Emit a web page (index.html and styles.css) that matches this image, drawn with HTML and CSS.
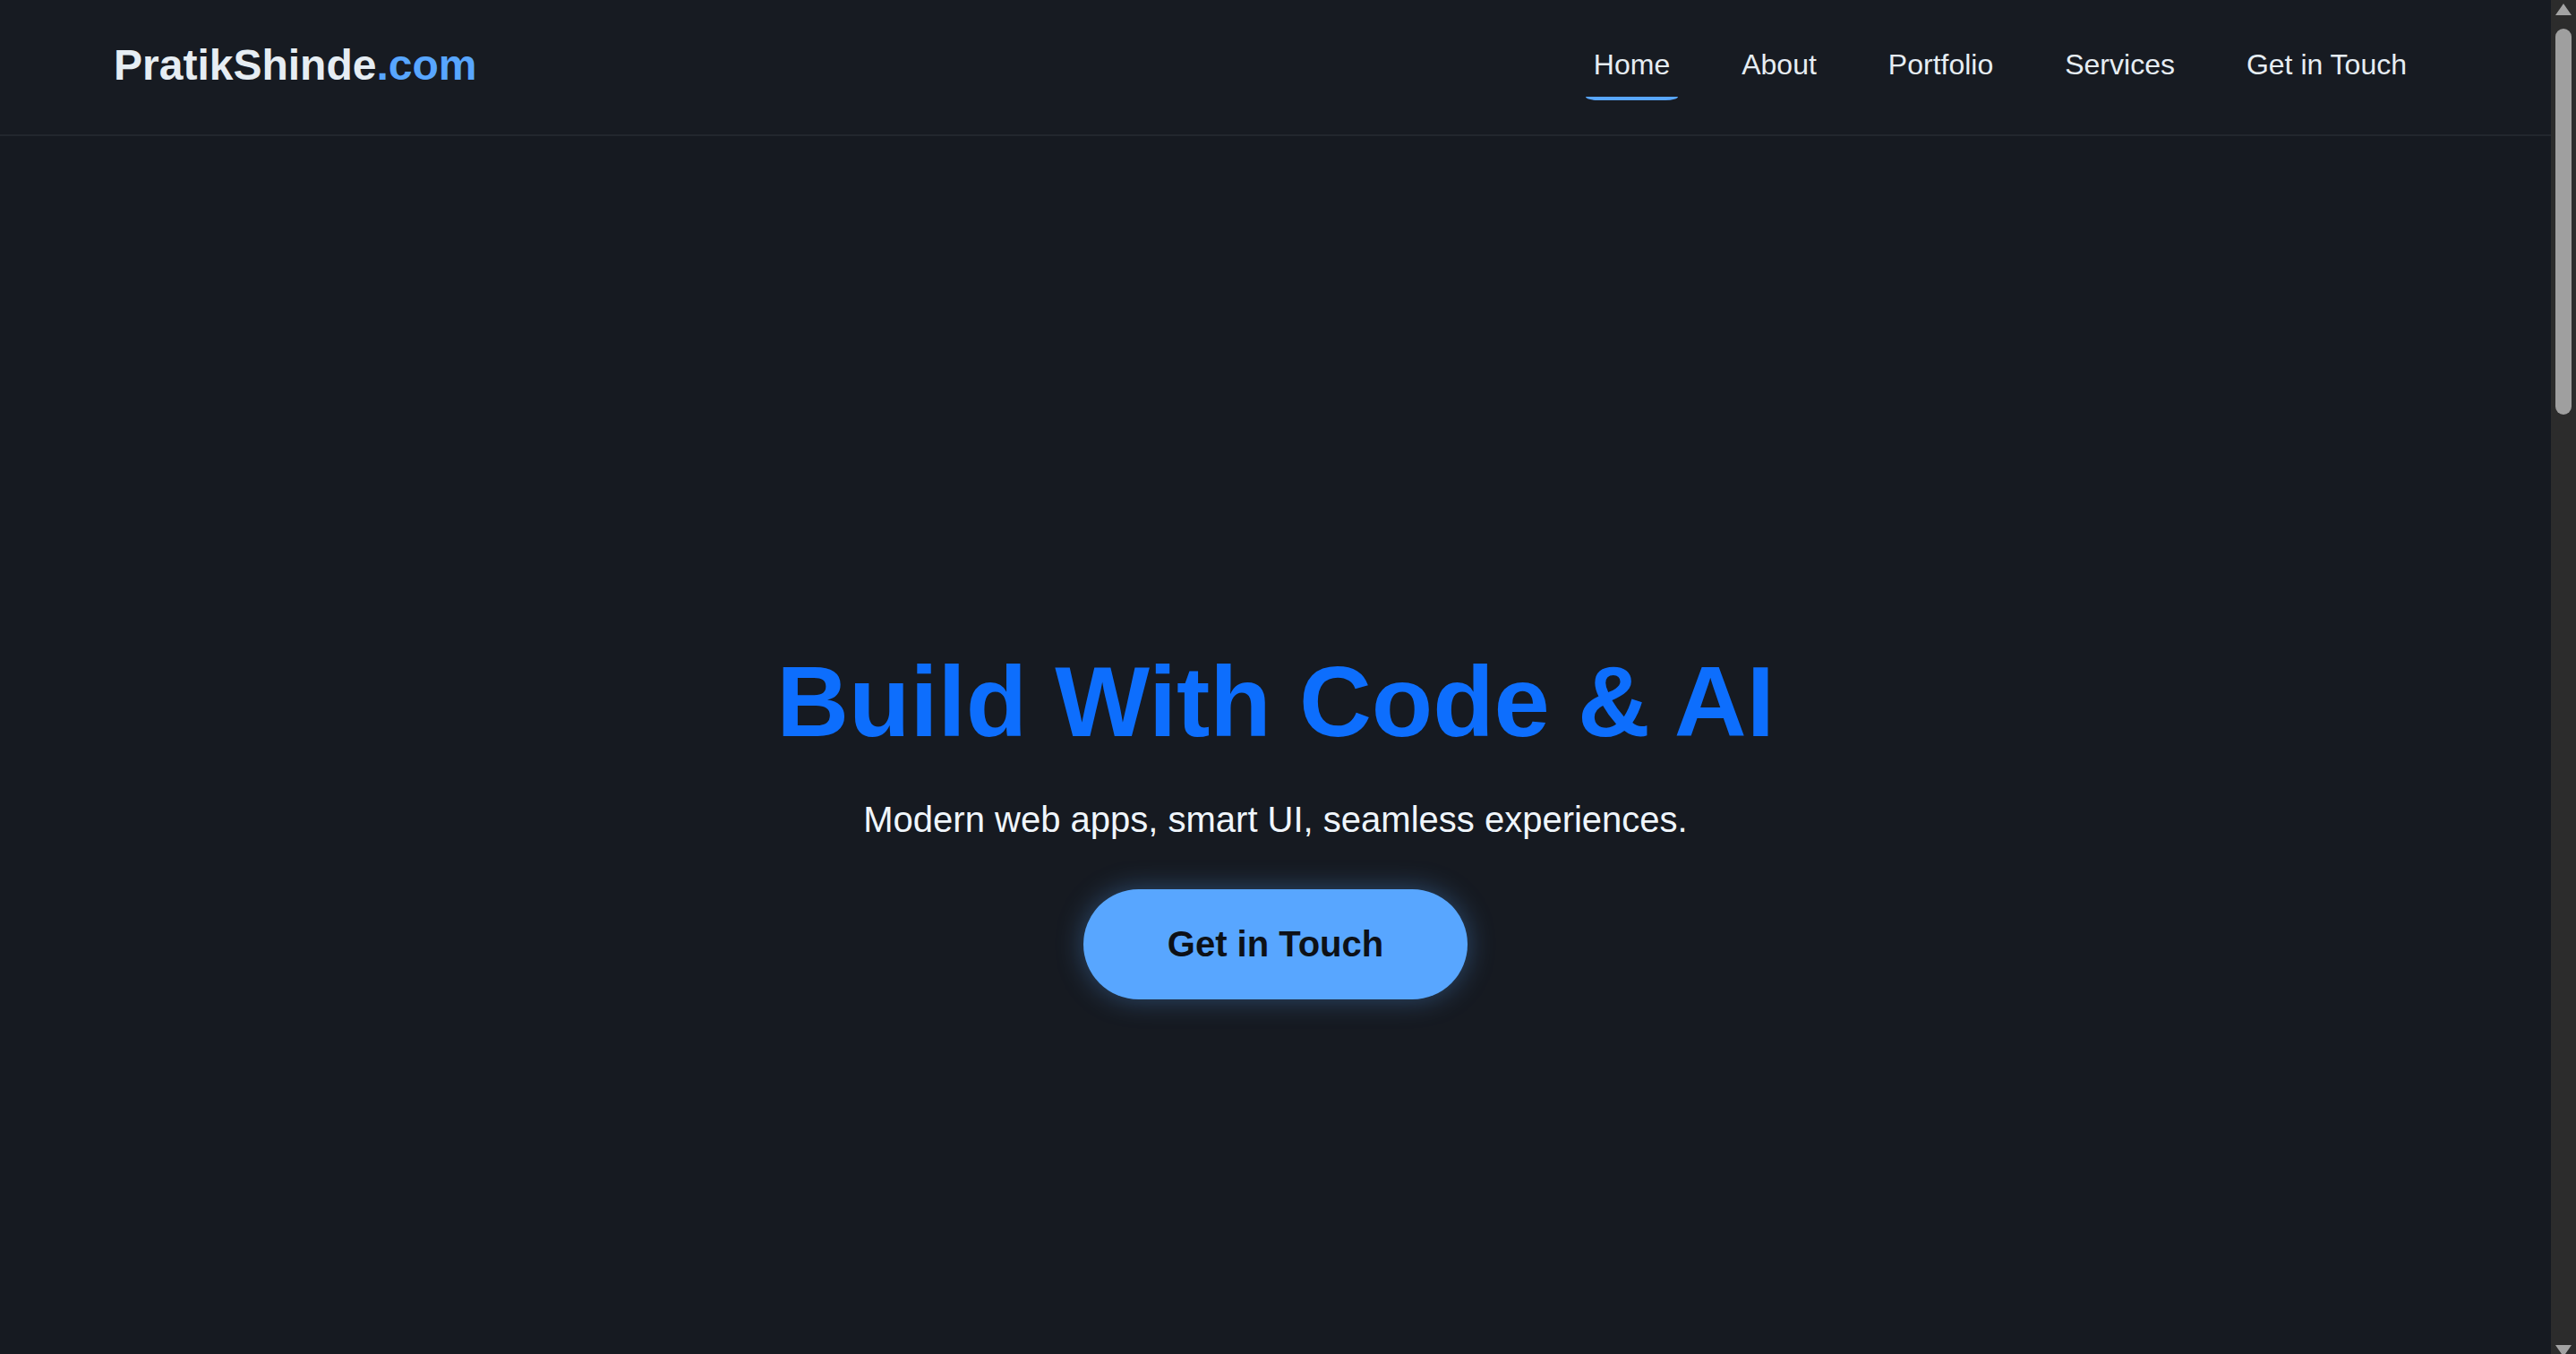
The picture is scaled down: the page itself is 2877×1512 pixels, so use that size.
FILE: index.html
```html
<!DOCTYPE html>
<html lang="en">
<head>
<meta charset="utf-8">
<title>PratikShinde.com</title>
<link rel="stylesheet" href="styles.css">
</head>
<body>
<div class="page">
  <header class="site-header">
    <a class="logo" href="#home">PratikShinde<span class="logo-accent">.com</span></a>
    <nav class="nav">
      <a class="nav-link active" href="#home">Home</a>
      <a class="nav-link" href="#about">About</a>
      <a class="nav-link" href="#portfolio">Portfolio</a>
      <a class="nav-link" href="#services">Services</a>
      <a class="nav-link" href="#contact">Get in Touch</a>
    </nav>
  </header>
  <main>
    <section class="hero" id="home">
      <h1 class="hero-title">Build With Code &amp; AI</h1>
      <p class="hero-sub">Modern web apps, smart UI, seamless experiences.</p>
      <a class="hero-btn" href="#contact">Get in Touch</a>
    </section>
  </main>
</div>
<div class="scrollbar" aria-hidden="true">
  <div class="sb-btn sb-up"><span class="sb-arrow-up"></span></div>
  <div class="sb-track"><div class="sb-thumb"></div></div>
  <div class="sb-btn sb-down"><span class="sb-arrow-down"></span></div>
</div>
</body>
</html>
```
FILE: styles.css
```css
html,
body {
  height: 100%;
  margin: 0;
  overflow: hidden;
  background: #161a21;
}
body {
  display: flex;
  font-family: "Liberation Sans", Arial, sans-serif;
  color: #e6edf3;
}
a {
  text-decoration: none;
}

.page {
  flex: 1;
  min-width: 0;
  height: 100vh;
  overflow: hidden;
  background: #161a21;
}

/* window scrollbar */
.scrollbar {
  width: 28px;
  height: 100vh;
  flex: none;
  display: flex;
  flex-direction: column;
  background: #2c2c2c;
}
.sb-btn {
  flex: none;
  display: flex;
  justify-content: center;
  overflow: hidden;
}
.sb-up {
  height: 28px;
  padding-top: 4px;
  box-sizing: border-box;
}
.sb-down {
  height: 14px;
  padding-top: 4px;
  box-sizing: border-box;
}
.sb-arrow-up {
  width: 0;
  height: 0;
  border-left: 9px solid transparent;
  border-right: 9px solid transparent;
  border-bottom: 13px solid #a3a3a3;
}
.sb-arrow-down {
  width: 0;
  height: 0;
  border-left: 9px solid transparent;
  border-right: 9px solid transparent;
  border-top: 13px solid #a3a3a3;
}
.sb-track {
  flex: 1;
  padding: 4px 5px 0;
}
.sb-thumb {
  height: 431px;
  border-radius: 9px;
  background: #9f9f9f;
}

/* header */
.site-header {
  height: 152px;
  box-sizing: border-box;
  padding: 0 152px 5px 127px;
  display: flex;
  align-items: center;
  justify-content: space-between;
  background: #171b22;
  border-bottom: 2px solid #22272e;
}
.logo {
  font-size: 48px;
  font-weight: 700;
  color: #e6edf3;
  line-height: 1.15;
}
.logo-accent {
  color: #58a6ff;
}
.nav {
  display: flex;
  align-items: center;
  gap: 62px;
}
.nav-link {
  position: relative;
  padding: 0 9px;
  font-size: 32px;
  line-height: 1.15;
  color: #e6edf3;
}
.nav-link.active::after {
  content: "";
  position: absolute;
  left: 0;
  right: 0;
  top: calc(100% + 17px);
  height: 4px;
  background: #58a6ff;
  border-radius: 0 0 14px 14px / 0 0 4px 4px;
}

/* hero */
.hero {
  min-height: 1512px;
  box-sizing: border-box;
  padding-top: 17px;
  display: flex;
  flex-direction: column;
  align-items: center;
  justify-content: center;
  text-align: center;
}
.hero-title {
  margin: 0;
  font-size: 112px;
  line-height: 1.2;
  font-weight: 700;
  color: #0d6efd;
}
.hero-sub {
  margin: 34px 0 0;
  font-size: 40px;
  line-height: 1.5;
  color: #f0f6fc;
}
.hero-btn {
  margin-top: 48px;
  height: 123px;
  box-sizing: border-box;
  padding: 0 94px;
  display: inline-flex;
  align-items: center;
  justify-content: center;
  border-radius: 62px;
  background: #58a6ff;
  color: #0d1117;
  font-size: 40px;
  font-weight: 700;
  box-shadow: 0 0 30px rgba(88, 166, 255, 0.35);
}
```
